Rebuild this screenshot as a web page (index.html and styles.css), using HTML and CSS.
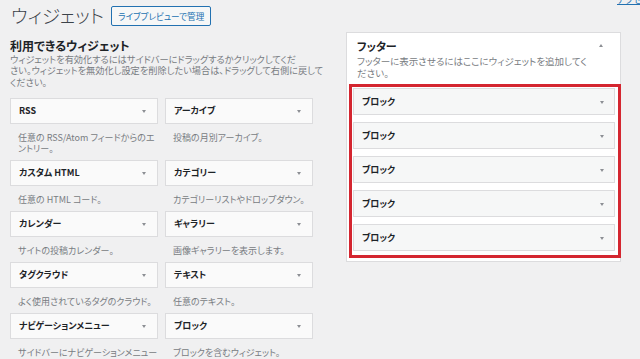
FILE: index.html
```html
<!DOCTYPE html>
<html lang="ja">
<head>
    <meta charset="utf-8">
    <title>ウィジェット</title>
    <link rel="stylesheet" href="styles.css">
</head>
<body>
<div class="wrap">
    <div class="head">
        <h1>ウィジェット</h1>
        <a class="btn" href="#">ライブプレビューで管理</a>
        <div class="corner"><a href="#">アクセシビリティモードを有効化</a></div>
    </div>

    <div class="main">
        <div class="left">
            <h2>利用できるウィジェット</h2>
            <p class="intro">ウィジェットを有効化するにはサイドバーにドラッグするかクリックしてくだ<br>さい。ウィジェットを無効化し設定を削除したい場合は、ドラッグして右側に戻して<br>ください。</p>

            <div class="widgets">
                <div class="widget">
                    <div class="widget-top">RSS</div>
                    <div class="widget-desc">任意の RSS/Atom フィードからのエントリー。</div>
                </div>
                <div class="widget">
                    <div class="widget-top">アーカイブ</div>
                    <div class="widget-desc">投稿の月別アーカイブ。</div>
                </div>
                <div class="widget">
                    <div class="widget-top">カスタム HTML</div>
                    <div class="widget-desc">任意の HTML コード。</div>
                </div>
                <div class="widget">
                    <div class="widget-top">カテゴリー</div>
                    <div class="widget-desc">カテゴリーリストやドロップダウン。</div>
                </div>
                <div class="widget">
                    <div class="widget-top">カレンダー</div>
                    <div class="widget-desc">サイトの投稿カレンダー。</div>
                </div>
                <div class="widget">
                    <div class="widget-top">ギャラリー</div>
                    <div class="widget-desc">画像ギャラリーを表示します。</div>
                </div>
                <div class="widget">
                    <div class="widget-top">タグクラウド</div>
                    <div class="widget-desc">よく使用されているタグのクラウド。</div>
                </div>
                <div class="widget">
                    <div class="widget-top">テキスト</div>
                    <div class="widget-desc">任意のテキスト。</div>
                </div>
                <div class="widget">
                    <div class="widget-top">ナビゲーションメニュー</div>
                    <div class="widget-desc">サイドバーにナビゲーションメニューを追加。</div>
                </div>
                <div class="widget">
                    <div class="widget-top">ブロック</div>
                    <div class="widget-desc">ブロックを含むウィジェット。</div>
                </div>
            </div>
        </div>

        <div class="sidebar">
            <div class="sidebar-head">フッター</div>
            <p class="sidebar-desc">フッターに表示させるにはここにウィジェットを追加してください。</p>
            <div class="marked">
                <div class="item">ブロック</div>
                <div class="item">ブロック</div>
                <div class="item">ブロック</div>
                <div class="item">ブロック</div>
                <div class="item">ブロック</div>
            </div>
        </div>
    </div>
</div>
</body>
</html>
```

FILE: styles.css
```css
body,html{padding: 0px;margin: 0px;}
body{
	background:#f0f0f1;
	color:#1d2327;
	font-family:"Noto Sans CJK JP", "Liberation Sans", sans-serif;
	font-feature-settings:"palt";
	height:359px;
	overflow:hidden;
}
.wrap{padding-left:10px;}

.head{display:flex;align-items:center;height:32px;}
.head h1{font-size:18.5px;font-weight:300;margin:-2px 0 0 1px;line-height:22px;color:#3c434a;}
.btn{
	margin-left:7px;
	margin-top:-1px;
	height:18px;
	line-height:18px;
	padding:0 6px;
	font-size:8.6px;
	color:#2271b1;
	border:1px solid #2271b1;
	border-radius:2px;
	background:#f6f7f7;
	text-decoration:none;
	white-space:nowrap;
}
.corner{
	margin-left:auto;
	width:23px;
	flex-shrink:0;
	align-self:flex-start;
	margin-top:-7px;
	font-size:9px;
	white-space:nowrap;
}
.corner a{color:#2271b1;}

.main{display:flex;align-items:flex-start;}
.left{width:305px;}
.left h2{font-size:12px;line-height:15px;margin:6px 0 1px;font-weight:bold;}
.intro{font-size:9.2px;line-height:11.3px;color:#787c82;margin:0 -20px 10px 0;white-space:nowrap;}

.widgets{display:grid;grid-template-columns:148px 148px;column-gap:7px;}
.widget-top,.item{
	position:relative;
	height:24px;
	line-height:24px;
	padding-left:8px;
	font-size:9px;
	font-weight:bold;
	background:#fafafa;
	border:1px solid #dcdcde;
}
.widget-top::after,.item::after{
	content:"";
	position:absolute;
	right:11px;
	top:11px;
	border-left:2.5px solid transparent;
	border-right:2.5px solid transparent;
	border-top:3px solid #8c8f94;
}
.widget-desc{font-size:9px;line-height:11px;color:#787c82;padding:8px 0 6px 8px;}

.sidebar{
	margin-left:31px;
	width:273px;
	background:#fff;
	border:1px solid #dcdcde;
	padding-bottom:3px;
}
.sidebar-head{position:relative;font-size:11px;font-weight:bold;line-height:15px;padding:6px 10px 0;}
.sidebar-head::after{
	content:"";
	position:absolute;
	right:17px;
	top:11px;
	border-left:2.5px solid transparent;
	border-right:2.5px solid transparent;
	border-bottom:3px solid #8c8f94;
}
.sidebar-desc{font-size:9.5px;line-height:11.5px;color:#787c82;margin:2px 30px 5px 10px;}

.marked{
	margin:0 -1px 0 2px;
	border:3px solid #d42630;
	padding:1px 3px 4px 1px;
	display:flex;
	flex-direction:column;
	gap:7px;
}
.item{height:25px;line-height:25px;background:#f6f7f7;}
.item::after{right:10px;top:12px;}
```
